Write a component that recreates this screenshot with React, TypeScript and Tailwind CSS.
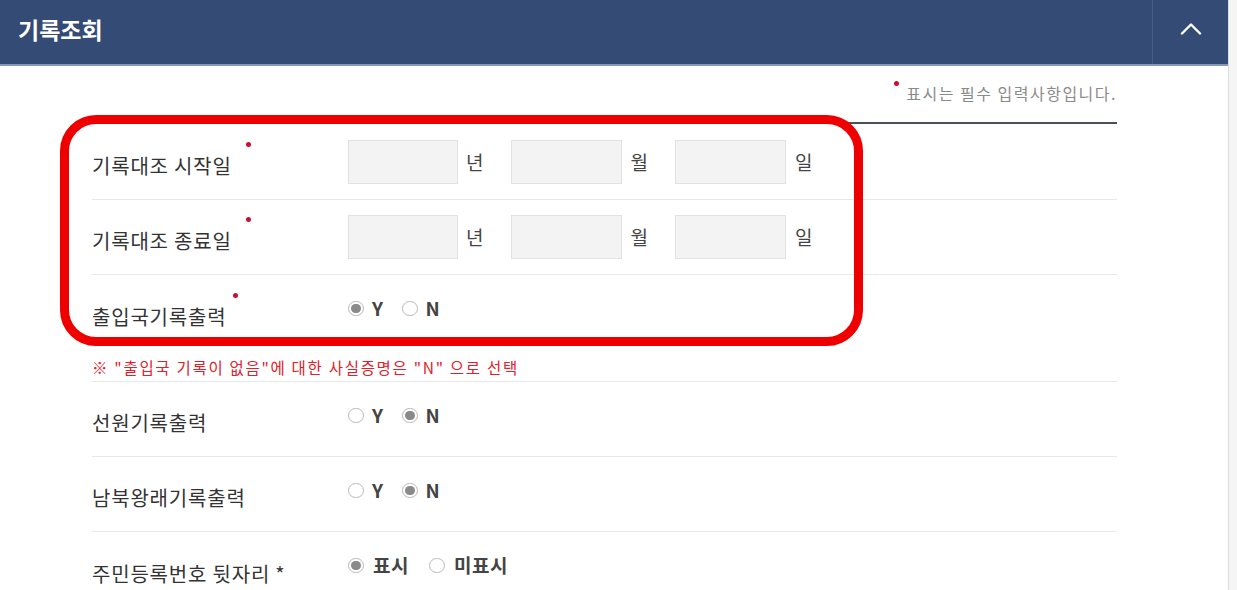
const font = { fontFamily: '"Noto Sans CJK KR", "Noto Sans", sans-serif' };

function Dot({ offset }: { offset: string }) {
  return <span className={`absolute top-[-9px] h-[5px] w-[5px] rounded-full bg-[#c8102e] ${offset}`} />;
}

function Radio({ checked }: { checked?: boolean }) {
  return (
    <span className="flex h-[15px] w-[16px] items-center justify-center rounded-full border border-[#b8b8b8] bg-white">
      {checked && <span className="h-[9px] w-[10px] rounded-full bg-[#8a8a8a]" />}
    </span>
  );
}

function RadioPair({ a, b, first, gap, inner }: { a: string; b: string; first: boolean; gap: string; inner: string }) {
  return (
    <div className={`flex items-center ${gap} -translate-y-[4px]`}>
      <label className={`flex items-center ${inner} text-[19px] font-bold tracking-[0.5px] text-[#444]`}>
        <Radio checked={first} />
        {a}
      </label>
      <label className={`flex items-center ${inner} text-[19px] font-bold tracking-[0.5px] text-[#444]`}>
        <Radio checked={!first} />
        {b}
      </label>
    </div>
  );
}

function DateInputs() {
  return (
    <div className="flex items-center">
      <input className="h-[44px] w-[110px] border border-[#e2e2e2] bg-[#f3f3f3]" />
      <span className="ml-[8px] mr-[28px] text-[19px] text-[#444]">년</span>
      <input className="h-[44px] w-[111px] border border-[#e2e2e2] bg-[#f3f3f3]" />
      <span className="ml-[8px] mr-[27px] text-[19px] text-[#444]">월</span>
      <input className="h-[44px] w-[111px] border border-[#e2e2e2] bg-[#f3f3f3]" />
      <span className="ml-[9px] text-[19px] text-[#444]">일</span>
    </div>
  );
}

function Row({ label, dot, children, last }: { label: string; dot?: string; children: React.ReactNode; last?: boolean }) {
  return (
    <div className={`flex h-[75px] items-center ${last ? '' : 'border-b border-[#e8e8e8]'}`}>
      <div className="w-[256px] pt-[8px] text-[20px] tracking-[0.8px] text-[#333]">
        <span className="relative">
          {label}
          {dot && <Dot offset={dot} />}
        </span>
      </div>
      {children}
    </div>
  );
}

export default function App() {
  return (
    <div className="relative flex h-[590px] w-[1237px] overflow-hidden bg-white" style={font}>
      <div className="w-[1229px] border-r border-[#dcdcdc]">
        <header className="flex h-[66px] items-stretch border-b-2 border-[#8796b4] bg-[#344b75]">
          <h1 className="flex flex-1 items-center pb-[6px] pl-[18px] text-[23px] font-bold text-white">기록조회</h1>
          <div className="flex w-[76px] items-center justify-center border-l border-[#445c86] pb-[8px]">
            <svg width="22" height="13" viewBox="0 0 22 13" fill="none" stroke="white" strokeWidth="2.4" strokeLinecap="round" strokeLinejoin="round">
              <polyline points="2,11.5 11,2.5 20,11.5" />
            </svg>
          </div>
        </header>

        <div className="ml-[92px] w-[1025px]">
          <div className="flex h-[58px] items-center justify-end border-b-2 border-[#4a4f5a] pb-[2px]">
            <span className="relative text-[16px] tracking-[1.5px] text-[#8a8a8a]">
              <span className="absolute -left-[12px] top-[0px] h-[5px] w-[5px] rounded-full bg-[#c8102e]" />
              표시는 필수 입력사항입니다.
            </span>
          </div>

          <div className="pt-[1px]">
            <Row label="기록대조 시작일" dot="-right-[19px]">
              <DateInputs />
            </Row>
            <Row label="기록대조 종료일" dot="-right-[19px]">
              <DateInputs />
            </Row>
            <div className="border-b border-[#e8e8e8]">
              <Row label="출입국기록출력" dot="-right-[12px]" last>
                <RadioPair a="Y" b="N" first gap="gap-[18px]" inner="gap-[8px]" />
              </Row>
              <p className="pb-[4px] pt-[7px] text-[15.5px] leading-[20px] tracking-[1.7px] text-[#e0202a]">
                ※ "출입국 기록이 없음"에 대한 사실증명은 "N" 으로 선택
              </p>
            </div>
            <Row label="선원기록출력">
              <RadioPair a="Y" b="N" first={false} gap="gap-[18px]" inner="gap-[8px]" />
            </Row>
            <Row label="남북왕래기록출력">
              <RadioPair a="Y" b="N" first={false} gap="gap-[18px]" inner="gap-[8px]" />
            </Row>
            <Row label="주민등록번호 뒷자리 *" last>
              <RadioPair a="표시" b="미표시" first gap="gap-[20px]" inner="gap-[9px]" />
            </Row>
          </div>
        </div>
      </div>
      <div className="flex-1 bg-[#f5f5f5]" />

      <div className="pointer-events-none absolute left-[60px] top-[115px] h-[231px] w-[803px] rounded-[36px] border-[9px] border-[#ee0000]" />
    </div>
  );
}
